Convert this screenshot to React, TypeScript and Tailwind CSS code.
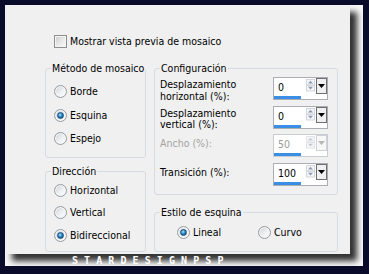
import React from "react";

function Radio({ checked = false, label }: { checked?: boolean; label: string }) {
  return (
    <div className="flex items-center gap-[3px] h-[13px]">
      <span className="w-[13px] h-[13px] shrink-0 rounded-full border border-[#979b9f] bg-[linear-gradient(135deg,#cdd1d5_0%,#eef0f2_55%,#ffffff_100%)] flex items-center justify-center shadow-[inset_0_0_0_1px_#f6f6f6]">
        {checked && (
          <span className="w-[7px] h-[7px] rounded-full border border-[#1d4f78] bg-[radial-gradient(circle_at_40%_35%,#a6e2ff_0%,#2b86c8_45%,#0d3f6d_100%)]" />
        )}
      </span>
      <span className="leading-[13px] whitespace-nowrap">{label}</span>
    </div>
  );
}

function Group({
  title,
  className,
  children,
}: {
  title: string;
  className: string;
  children: React.ReactNode;
}) {
  return (
    <fieldset className={`border border-[#d5dbe0] rounded-[3px] min-w-0 ${className}`}>
      <legend className="ml-[5px] px-[1px] leading-[13px] whitespace-nowrap">{title}</legend>
      {children}
    </fieldset>
  );
}

function Spin({ value, disabled = false }: { value: string; disabled?: boolean }) {
  return (
    <div
      className={`w-[55px] h-[23px] shrink-0 border ${
        disabled ? "border-[#c9ccd2]" : "border-[#abadb3]"
      } bg-white flex flex-col`}
    >
      <div className="flex h-[17px] items-start">
        <div
          className={`flex-1 pl-[4px] pt-[4px] leading-[11px] ${
            disabled ? "text-[#9a9a9a]" : "text-black"
          }`}
        >
          {value}
        </div>
        <svg width="9" height="13" viewBox="0 0 9 13" className="mt-[1px] mr-[1px]">
          <rect x="0.5" y="0.5" width="8" height="5.5" fill="#f4f5f7" stroke={disabled ? "#e2e4e8" : "#d3d7dd"} />
          <rect x="0.5" y="6.5" width="8" height="5.5" fill="#f4f5f7" stroke={disabled ? "#e2e4e8" : "#d3d7dd"} />
          <path d="M4.5 1.8 L7 4.6 L2 4.6 Z" fill={disabled ? "#c4cbd4" : "#8a9bb2"} />
          <path d="M2 7.8 L7 7.8 L4.5 10.6 Z" fill={disabled ? "#c4cbd4" : "#8a9bb2"} />
        </svg>
        <div
          className={`w-[11px] h-[16px] border ${
            disabled ? "border-[#cfd1d4] bg-[#f7f7f7]" : "border-[#6f6f6f] bg-[#f0f0f0]"
          } flex items-center justify-center`}
        >
          <svg width="7" height="4" viewBox="0 0 7 4">
            <path d="M0 0 L7 0 L3.5 4 Z" fill={disabled ? "#b8b8b8" : "#000"} />
          </svg>
        </div>
      </div>
      <div className="h-[4px] pt-[1px]">
        <div className="w-[27px] h-[3px] bg-[#3a8fe4]" />
      </div>
    </div>
  );
}

export default function App() {
  return (
    <div className="w-[369px] h-[274px] bg-[#0a0a2b] pt-[5px] pl-[5px] overflow-hidden font-[family-name:DejaVu_Sans_Condensed,DejaVu_Sans,sans-serif] text-[10.5px] text-black">
      <div className="w-[358px] h-[261px] bg-[#f7f7f7]">
        <div className="w-[345px] h-[249px] bg-[#f0f0f0] shadow-[7px_7px_6px_rgba(0,0,0,0.8)] pt-[30px] pl-[40px]">
          <div className="flex items-center gap-[3px] h-[13px] ml-[9px]">
            <span className="w-[13px] h-[13px] border border-[#8e8f8f] bg-[linear-gradient(135deg,#cbcbcb_0%,#ececec_60%,#fafafa_100%)] shadow-[inset_0_0_0_1px_#f4f4f4]" />
            <span className="leading-[13px]">Mostrar vista previa de mosaico</span>
          </div>

          <div className="flex gap-[8px] mt-[14px]">
            <div className="w-[101px] flex flex-col">
              <Group title="Método de mosaico" className="h-[96px]">
                <div className="flex flex-col gap-[10.5px] pt-[10px] pl-[8px]">
                  <Radio label="Borde" />
                  <Radio checked label="Esquina" />
                  <Radio label="Espejo" />
                </div>
              </Group>
              <Group title="Dirección" className="h-[87px] mt-[7px]">
                <div className="flex flex-col gap-[9.75px] pt-[5.5px] pl-[8px]">
                  <Radio label="Horizontal" />
                  <Radio label="Vertical" />
                  <Radio checked label="Bidireccional" />
                </div>
              </Group>
            </div>

            <div className="w-[184px] flex flex-col">
              <Group title="Configuración" className="h-[133px]">
                <div className="flex flex-col gap-[5.7px] pt-[2px] pl-[5px] pr-[9px]">
                  <div className="flex items-start h-[23px]">
                    <div className="flex-1 pt-[2px] leading-[11.5px]">
                      Desplazamiento
                      <br />
                      horizontal (%):
                    </div>
                    <Spin value="0" />
                  </div>
                  <div className="flex items-start h-[23px]">
                    <div className="flex-1 pt-[2px] leading-[11.5px]">
                      Desplazamiento
                      <br />
                      vertical (%):
                    </div>
                    <Spin value="0" />
                  </div>
                  <div className="flex items-start h-[23px]">
                    <div className="flex-1 pt-[4px] leading-[11.5px] text-[#a3a3a3]">Ancho (%):</div>
                    <Spin value="50" disabled />
                  </div>
                  <div className="flex items-start h-[23px]">
                    <div className="flex-1 pt-[4px] leading-[11.5px]">Transición (%):</div>
                    <Spin value="100" />
                  </div>
                </div>
              </Group>
              <Group title="Estilo de esquina" className="h-[46px] mt-[11px]">
                <div className="flex pt-[7px] pl-[22px]">
                  <div className="w-[81px]">
                    <Radio checked label="Lineal" />
                  </div>
                  <Radio label="Curvo" />
                </div>
              </Group>
            </div>
          </div>
        </div>
        <div className="mt-[3px] pl-[67px] h-[8px] leading-[8px] text-[10px] font-bold tracking-[6.1px] text-white font-[family-name:DejaVu_Sans_Mono,monospace]">
          STARDESIGNPSP
        </div>
      </div>
    </div>
  );
}
